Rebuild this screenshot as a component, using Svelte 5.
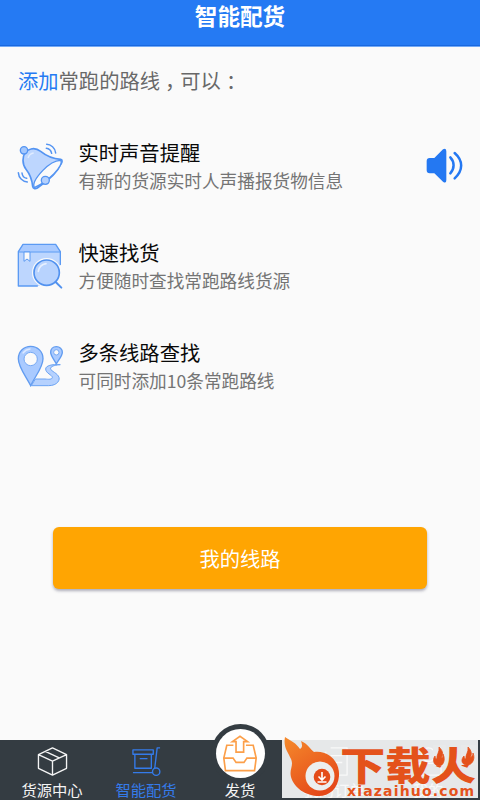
<script lang="ts">
	const features = [
		{ icon: 'bell', title: '实时声音提醒', text: '有新的货源实时人声播报货物信息' },
		{ icon: 'search', title: '快速找货', text: '方便随时查找常跑路线货源' },
		{ icon: 'route', title: '多条线路查找', text: '可同时添加10条常跑路线' }
	];

	const tabs = [
		{ icon: 'box', label: '货源中心' },
		{ icon: 'cart', label: '智能配货' },
		{ icon: 'send', label: '发货' },
		{ icon: 'orders', label: '我的订单' },
		{ icon: 'user', label: '我的' }
	];

	let active = $state('cart');
</script>

<div class="screen">
	<header>
		<h1>智能配货</h1>
	</header>

	<main>
		<p class="intro"><a href="#add">添加</a>常跑的路线<span class="punct">，</span>可以<span class="punct colon">：</span></p>

		<ul class="features">
			{#each features as feature}
				<li>
					<svg class="feature-icon" viewBox="21 30 144 150">
						{#if feature.icon === 'bell'}
							<path d="M39 91C39 74 48 60 63 57C74 54 84 58 92 64C108 77 129 86 152 88C158 89 157 96 153 102C141 130 112 154 82 174C75 178 69 176 68 169C66 149 60 133 48 118C41 109 39 99 39 91Z" fill="#bdd6fe" stroke="#5494f2" stroke-width="5" />
							<path d="M151 91C133 91 115 104 98 122C80 141 67 162 73 173C94 163 117 146 132 131C148 115 159 95 151 91Z" fill="#fafafa" stroke="#5494f2" stroke-width="4" />
							<circle cx="42" cy="61" r="11" fill="#a5c8fd" stroke="#5494f2" stroke-width="4" />
							<circle cx="106" cy="151" r="12" fill="#b4d0fd" stroke="#5494f2" stroke-width="4" />
							<path d="M54 84C57 75 63 70 71 69" fill="none" stroke="#e0ecff" stroke-width="4" />
							<path d="M110 43C122 43 136 54 137 69M109 55C117 56 123 62 125 70M25 128C26 143 37 155 52 156M36 129C37 138 43 144 50 145" fill="none" stroke="#5494f2" stroke-width="4.5" stroke-linecap="round" />
						{:else if feature.icon === 'search'}
							<path d="M39 43H137L151 65V168H25V65Z" fill="#bdd6fe" />
							<path d="M39 43H137L151 65H25Z" fill="#a9caff" />
							<path d="M151 104V65L137 43H39L25 65V168H82" fill="none" stroke="#5b9af3" stroke-width="4" stroke-linejoin="round" stroke-linecap="round" />
							<path d="M25 66H151" stroke="#5b9af3" stroke-width="3" />
							<path d="M42 66V94L51 87L60 94V66Z" fill="#fafafa" stroke="#5b9af3" stroke-width="3" />
							<path d="M153 104V173H84" fill="#fafafa" />
							<circle cx="110" cy="128" r="44" fill="#fafafa" />
							<circle cx="110" cy="128" r="38" fill="#b8d3fe" stroke="#5292ef" stroke-width="5" />
							<path d="M85 124C87 111 96 103 108 101" fill="none" stroke="#e7f0ff" stroke-width="5" stroke-linecap="round" />
							<path d="M137 156L154 173" stroke="#5292ef" stroke-width="6" stroke-linecap="round" />
						{:else}
							<path d="M62 167C48 139 25 111 25 86C25 64 42 49 62 49C83 49 99 65 99 86C99 112 75 139 62 167Z" fill="#a9caff" stroke="#629cf0" stroke-width="4" />
							<circle cx="62" cy="87" r="20" fill="#fafafa" stroke="#76a9f4" stroke-width="3" />
							<path d="M39 69C44 62 52 58 60 57" fill="none" stroke="#dce9ff" stroke-width="4" stroke-linecap="round" />
							<path d="M139 102C134 90 122 79 122 67C122 57 129 50 139 50C149 50 157 57 157 67C157 79 145 90 139 102Z" fill="#a9caff" stroke="#629cf0" stroke-width="4" />
							<circle cx="139" cy="67" r="8" fill="#fafafa" stroke="#76a9f4" stroke-width="3" />
							<path d="M64 167H116C142 167 153 149 145 138C138 127 118 121 122 114C125 107 139 105 151 104C126 102 107 107 107 117C107 130 127 135 127 142C127 149 115 148 105 147H76Z" fill="#b5d1fe" stroke="#6ba3f3" stroke-width="3" stroke-linejoin="round" />
						{/if}
					</svg>
					<div class="feature-body">
						<h2>{feature.title}</h2>
						<p>{feature.text}</p>
					</div>
					{#if feature.icon === 'bell'}
						<svg class="speaker" viewBox="30 33 117 111">
							<path d="M44 66H58L84 40Q94 34 94 46V132Q94 144 84 137L58 112H44Q35 112 35 103V75Q35 66 44 66Z" fill="#2478f2" />
							<path d="M106 64C119 78 119 98 106 112M119 51C145 74 145 103 119 127" fill="none" stroke="#2478f2" stroke-width="7.5" stroke-linecap="round" />
						</svg>
					{/if}
				</li>
			{/each}
		</ul>

		<button class="route-button">我的线路</button>
	</main>

	<nav>
		{#each tabs as tab}
			<button class="tab" class:active={active === tab.icon} onclick={() => (active = tab.icon)}>
				{#if tab.icon === 'send'}
					<span class="send-circle">
						<svg class="send-icon" viewBox="366 52 108 112">
							<g fill="none" stroke="#fc9f49" stroke-width="5" stroke-linejoin="miter">
								<path d="M400 83H380L371 122L376 160H464L469 122L460 83H438" />
								<path d="M371 122H399L408 135H432L441 122H469" />
								<path d="M408 104V72H397L420 56L443 72H431V104Z" />
							</g>
						</svg>
					</span>
				{:else}
					<svg class="tab-icon" viewBox="0 0 32 32">
						<g fill="none" stroke="currentColor" stroke-width="1.4" stroke-linejoin="round">
							{#if tab.icon === 'box'}
								<path d="M16 2L30.5 9V23L16 30L1.500 23V9ZM1.500 9L16 15.500L30.500 9M16 15.500V30M8.500 5.600L23 12.200" />
							{:else if tab.icon === 'cart'}
								<path d="M2 4H23V8.500H2ZM4 8.500V23H21V8.500M9 13H17M2 27.500H22M30 2H27L24.500 23" />
								<circle cx="26" cy="26.500" r="3.800" />
							{:else if tab.icon === 'orders'}
								<path d="M12 2H29V30H7V6M12 10H24M12 17H24M12 24H20" />
							{:else}
								<circle cx="16" cy="9" r="7" />
								<path d="M3 30V24Q3 18 10 18H22Q29 18 29 24V30Z" />
							{/if}
						</g>
					</svg>
				{/if}
				<span class="tab-label">{tab.label}</span>
			</button>
		{/each}
	</nav>

	<!-- Download site badge, sits over the last two tabs -->
	<div class="badge">
		<svg viewBox="282 734 198 64">
			<defs>
				<linearGradient id="flame" x1="0" y1="0" x2="0.6" y2="1">
					<stop offset="0" stop-color="#f58a2b" />
					<stop offset="1" stop-color="#e5491a" />
				</linearGradient>
			</defs>
			<path d="M282 740H478V798H282Z" fill="#f8fafa" opacity="0.91" />
			<path d="M285 737C291 741 296 743 300 749C303 747 302 744 301 741C308 744 310 749 314 752C329 750 340 762 339 776C338 789 329 796 319 796C306 796 294 788 291 777C289 769 294 766 291 759C288 752 283 747 285 737Z" fill="url(#flame)" />
			<circle cx="320" cy="776" r="14.500" fill="#eceeee" />
			<circle cx="322" cy="777" r="8.300" fill="#e44c1a" />
			<path d="M322 772V779M318.500 776.500L322 780L325.500 776.500M317.500 782H326.500" fill="none" stroke="#fff" stroke-width="1.600" />
			<text class="badge-name" x="340" y="779.5" textLength="136" lengthAdjust="spacingAndGlyphs">下载火</text>
			<path d="M433 745H446V766H433ZM461 745H476V765H461Z" fill="#e8eaea" />
			<path d="M439 747C444 752 443 755 441 758C443 758 443 756 443 754C446 760 443 766 439 766C434 766 432 760 435 756C435 758 436 759 437 759C436 755 440 752 439 747ZM468 747C472 751 472 755 470 758C472 757 473 755 473 753C476 760 471 766 466 765C461 764 461 759 464 756C464 758 465 759 466 759C465 755 469 752 468 747Z" fill="#e4521b" stroke="#e4521b" stroke-width="0.8" />
			<text class="badge-url" x="347" y="795.5" textLength="127">xiazaihuo.com</text>
		</svg>
	</div>
</div>

<style>
	:global(body) {
		margin: 0;
		background: #fafafa;
	}

	.screen {
		position: relative;
		display: flex;
		flex-direction: column;
		width: 480px;
		height: 800px;
		overflow: hidden;
		background: #fafafa;
		font-family: 'Noto Sans CJK SC', sans-serif;
	}

	h1,
	h2,
	p,
	ul {
		margin: 0;
		padding: 0;
		font-weight: 400;
	}

	button {
		padding: 0;
		border: 0;
		background: none;
		font-family: inherit;
		cursor: pointer;
	}

	header {
		box-sizing: border-box;
		height: 47px;
		border-bottom: 1px solid #72a9f6;
		background: #257af3;
		box-shadow: inset 0 -1px #1868df;
	}

	h1 {
		color: #fff;
		font-size: 22.6px;
		font-weight: 700;
		line-height: 32px;
		text-align: center;
	}

	main {
		display: flex;
		flex: 1;
		flex-direction: column;
	}

	.intro {
		padding: 17px 18px 0;
		color: #686868;
		font-size: 20.3px;
		line-height: 32px;
	}

	.intro a {
		color: #257af3;
		text-decoration: none;
	}

	.punct {
		margin-right: -5px;
		padding-left: 5px;
	}

	.features {
		display: flex;
		flex-direction: column;
		gap: 50px;
		padding: 44px 16px 0 17px;
		list-style: none;
	}

	.features li {
		display: flex;
		align-items: center;
		gap: 13.5px;
		height: 50px;
	}

	.feature-icon {
		width: 48px;
		height: 50px;
	}

	.feature-body {
		flex: 1;
		padding-top: 3px;
	}

	h2 {
		color: #080808;
		font-size: 20.3px;
		line-height: 28px;
	}

	.feature-body p {
		color: #747474;
		font-size: 17.65px;
		line-height: 29px;
	}

	.speaker {
		width: 39px;
		height: 37px;
	}

	.route-button {
		width: 374px;
		height: 62px;
		margin: 137px 0 0 53px;
		border-radius: 6px;
		background: #ffa502;
		box-shadow: 0 2px 3px rgba(60, 60, 90, 0.4);
		color: #fff;
		font-size: 20.3px;
	}

	nav {
		display: flex;
		box-sizing: border-box;
		height: 60px;
		padding: 0 5px 1px;
		background: #343c42;
	}

	.tab {
		display: flex;
		flex: 1 0 0;
		flex-direction: column;
		align-items: center;
		justify-content: flex-end;
		color: #f4f4f4;
	}

	.tab.active {
		color: #347bea;
	}

	.tab-icon {
		width: 31px;
		height: 31px;
		margin-bottom: 2px;
	}

	.tab-label {
		font-size: 15.3px;
		line-height: 20px;
	}

	.send-circle {
		display: flex;
		flex-shrink: 0;
		align-items: center;
		justify-content: center;
		width: 49px;
		height: 49px;
		margin-bottom: 1px;
		border-radius: 50%;
		background: #fff;
		box-shadow: 0 0 0 5px #343c42;
	}

	.send-icon {
		width: 36px;
		height: 37px;
	}

	.badge {
		position: absolute;
		right: 0;
		bottom: 2px;
		width: 198px;
		height: 64px;
	}

	.badge svg {
		display: block;
		width: 198px;
		height: 64px;
	}

	.badge-name {
		fill: #e4521b;
		font-size: 39px;
		font-weight: 900;
	}

	.badge-url {
		fill: #e4521b;
		font-family: 'DejaVu Sans', sans-serif;
		font-size: 14px;
		font-weight: 700;
	}
</style>
